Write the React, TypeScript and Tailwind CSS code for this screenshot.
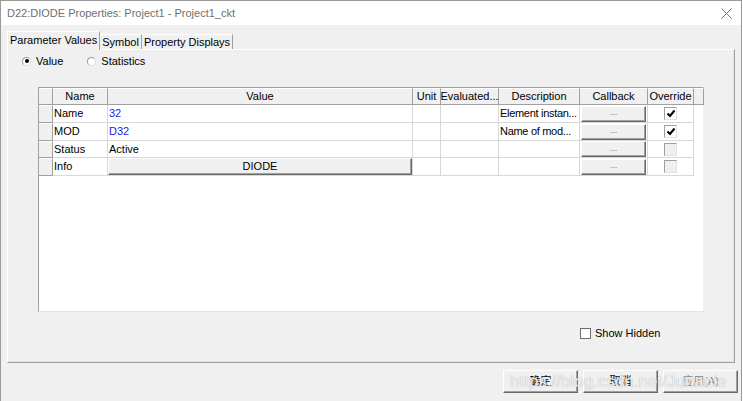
import React from 'react';

const F = "font-['Liberation_Sans','Noto_Sans_CJK_SC',sans-serif]";

function CheckMark() {
  return (
    <svg width="10" height="9" viewBox="0 0 10 9">
      <path d="M1.5 4.5 L4 7 L8.5 1.5" stroke="#000" strokeWidth="2" fill="none" />
    </svg>
  );
}

function Checkbox({ checked, disabled }: { checked?: boolean; disabled?: boolean }) {
  return (
    <div
      className={
        'w-[13px] h-[13px] border border-t-[#a0a0a0] border-l-[#a0a0a0] border-r-[#e3e3e3] border-b-[#e3e3e3] flex items-center justify-center ' +
        (disabled ? 'bg-[#f0f0f0]' : 'bg-white')
      }
    >
      {checked && <CheckMark />}
    </div>
  );
}

function RaisedButton({ children, className }: { children?: React.ReactNode; className?: string }) {
  return (
    <div
      className={
        'flex items-center justify-center bg-[#f0f0f0] border border-t-white border-l-white border-r-[#696969] border-b-[#696969] shadow-[inset_-1px_-1px_0_#a0a0a0] ' +
        (className || '')
      }
    >
      {children}
    </div>
  );
}

function Radio({ checked }: { checked?: boolean }) {
  return (
    <div className="w-[9px] h-[9px] rounded-full bg-white border border-[#9a9a9a] border-b-[#dcdcdc] border-r-[#dcdcdc] flex items-center justify-center">
      {checked && <div className="w-[4px] h-[4px] rounded-full bg-black" />}
    </div>
  );
}

const headers = [
  { label: '', cls: 'w-[14px]' },
  { label: 'Name', cls: 'w-[55px]' },
  { label: 'Value', cls: 'w-[305px]' },
  { label: 'Unit', cls: 'w-[28px]' },
  { label: 'Evaluated...', cls: 'w-[58px]' },
  { label: 'Description', cls: 'w-[81px]' },
  { label: 'Callback', cls: 'w-[68px]' },
  { label: 'Override', cls: 'w-[46px]' },
  { label: '', cls: 'w-[10px]' },
];

type Row = {
  name: string;
  value: string;
  blue?: boolean;
  button?: boolean;
  desc: string;
  checked: boolean;
  disabled: boolean;
  h: string;
};

const rows: Row[] = [
  { name: 'Name', value: '32', blue: true, desc: 'Element instan...', checked: true, disabled: false, h: 'h-[18px]' },
  { name: 'MOD', value: 'D32', blue: true, desc: 'Name of mod...', checked: true, disabled: false, h: 'h-[18px]' },
  { name: 'Status', value: 'Active', desc: '', checked: false, disabled: true, h: 'h-[17px]' },
  { name: 'Info', value: 'DIODE', button: true, desc: '', checked: false, disabled: true, h: 'h-[18px]' },
];

function Grid() {
  return (
    <div className="w-[666px] h-[225px] bg-white border border-t-[#a0a0a0] border-l-[#a0a0a0] border-r-[#f0f0f0] border-b-[#e3e3e3] flex flex-col">
      <div className="flex h-[17px]">
        {headers.map((h, i) => (
          <div
            key={i}
            className={
              h.cls +
              ' shrink-0 h-full bg-[#f0f0f0] border-r border-b border-r-[#a0a0a0] border-b-[#a0a0a0] border-t border-t-white flex items-center justify-center text-[11px] text-black leading-none whitespace-nowrap overflow-hidden'
            }
          >
            {h.label}
          </div>
        ))}
      </div>
      {rows.map((r, i) => (
        <div key={i} className={'flex ' + r.h}>
          <div className="w-[14px] shrink-0 h-full bg-[#f0f0f0] border-t border-t-white border-r border-b border-r-[#a0a0a0] border-b-[#a0a0a0]" />
          <div className="w-[55px] shrink-0 h-full border-r border-b border-[#d8d8d8] flex items-center pl-[1px] text-[11px] text-black">
            {r.name}
          </div>
          <div className="w-[305px] shrink-0 h-full border-r border-b border-[#d8d8d8] flex items-center text-[11px]">
            {r.button ? (
              <RaisedButton className="w-full h-full text-black">{r.value}</RaisedButton>
            ) : (
              <span className={'pl-[1px] ' + (r.blue ? 'text-[#1a1ae6]' : 'text-black')}>{r.value}</span>
            )}
          </div>
          <div className="w-[28px] shrink-0 h-full border-r border-b border-[#d8d8d8]" />
          <div className="w-[58px] shrink-0 h-full border-r border-b border-[#d8d8d8]" />
          <div className="w-[81px] shrink-0 h-full border-r border-b border-[#d8d8d8] flex items-center pl-[1px] text-[11px] tracking-[-0.3px] text-black whitespace-nowrap overflow-hidden">
            {r.desc}
          </div>
          <div className="w-[68px] shrink-0 h-full border-r border-b border-[#d8d8d8] flex items-center pl-[1px] pr-[1px]">
            <RaisedButton className="w-[66px] h-[16px] text-[9px] text-[#707070] leading-none pb-[2px]">...</RaisedButton>
          </div>
          <div className="w-[46px] shrink-0 h-full border-r border-b border-[#d8d8d8] flex items-center justify-center">
            <Checkbox checked={r.checked} disabled={r.disabled} />
          </div>
        </div>
      ))}
    </div>
  );
}

export default function App() {
  return (
    <div className={'w-[743px] h-[401px] bg-white overflow-hidden relative ' + F}>
      <div className="w-[742px] h-[401px] border-t border-l border-r border-[#9a9a9a] flex flex-col">
        {/* Title bar */}
        <div className="h-[24px] shrink-0 bg-white flex items-center pl-[6px] pr-[9px] justify-between">
          <span className="text-[11px] text-[#6f6f6f]">D22:DIODE Properties: Project1 - Project1_ckt</span>
          <svg width="11" height="11" viewBox="0 0 11 11">
            <path d="M0.5 0.5 L10.5 10.5 M10.5 0.5 L0.5 10.5" stroke="#707070" strokeWidth="1" />
          </svg>
        </div>
        {/* Body */}
        <div className="flex-1 bg-[#f0f0f0] flex flex-col">
          {/* Tabs */}
          <div className="h-[24px] shrink-0 flex items-end pl-[6px]">
            <div className="relative z-10 -mb-px h-[19px] px-[2px] bg-[#f0f0f0] border-t border-l border-t-white border-l-white border-r border-r-[#a0a0a0] flex items-center text-[11px] text-black leading-none pb-[1px]">
              Parameter Values
            </div>
            <div className="h-[15px] px-[2px] border-t border-t-white border-r border-r-[#a0a0a0] flex items-center text-[11px] text-black leading-none">
              Symbol
            </div>
            <div className="h-[15px] px-[2px] border-t border-t-white border-r border-r-[#a0a0a0] flex items-center text-[11px] text-black leading-none">
              Property Displays
            </div>
          </div>
          {/* Panel */}
          <div className="ml-[6px] w-[728px] h-[314px] shrink-0 border border-t-white border-l-white border-r-[#a0a0a0] border-b-[#a0a0a0] shadow-[inset_-1px_-1px_0_#e3e3e3] flex flex-col">
            <div className="mt-[4px] h-[14px] flex items-center pl-[14px] text-[11px] text-black">
              <Radio checked />
              <span className="ml-[5px]">Value</span>
              <div className="ml-[24px]">
                <Radio />
              </div>
              <span className="ml-[5px]">Statistics</span>
            </div>
            <div className="mt-[19px] ml-[30px]">
              <Grid />
            </div>
            <div className="mt-[14px] ml-[572px] h-[14px] flex items-center text-[11px] text-black">
              <div className="w-[11px] h-[11px] bg-white border border-[#6d6d6d]" />
              <span className="ml-[4px]">Show Hidden</span>
            </div>
          </div>
          {/* Buttons */}
          <div className="mt-[7px] pl-[502px] flex gap-[5px]">
            <RaisedButton className="w-[75px] h-[23px] text-[11px] text-black">确定</RaisedButton>
            <RaisedButton className="w-[75px] h-[23px] text-[11px] text-black">取消</RaisedButton>
            <RaisedButton className="w-[75px] h-[23px] text-[11px] text-[#8a8a8a]">应用(A)</RaisedButton>
          </div>
        </div>
      </div>
      {/* Watermark */}
      <div className="absolute left-[510px] top-[369px] text-[17px] text-white/80 [text-shadow:0_0_1px_#9a9a9a] pointer-events-none whitespace-nowrap">
        https://blog.csdn.net/Junanie
      </div>
    </div>
  );
}
